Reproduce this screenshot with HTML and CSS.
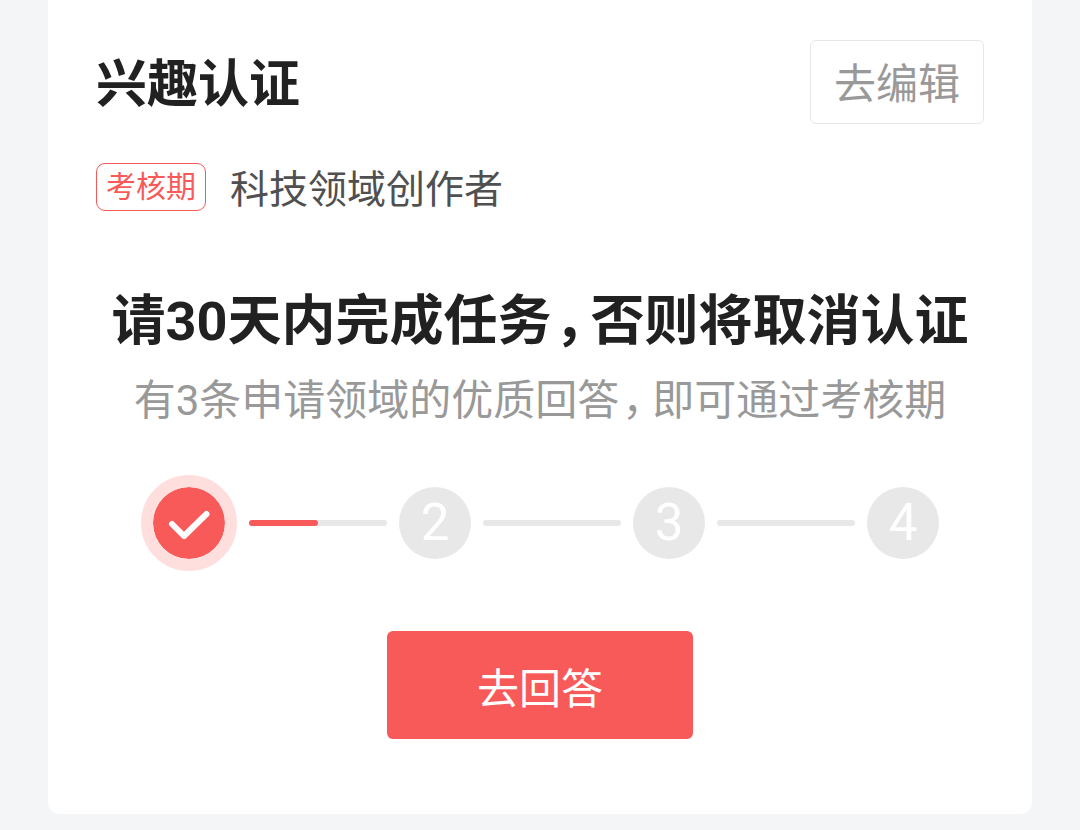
FILE: index.html
```html
<!DOCTYPE html>
<html lang="zh-CN">
<head>
  <meta charset="UTF-8">
  <meta name="viewport" content="width=device-width, initial-scale=1.0">
  <title>兴趣认证</title>
  <link rel="stylesheet" href="styles.css">
</head>
<body>
  <main class="card">
    <header class="card-header">
      <h1 class="card-title">兴趣认证</h1>
      <button class="btn-edit" type="button">去编辑</button>
    </header>

    <div class="identity">
      <span class="tag">考核期</span>
      <span class="identity-name">科技领域创作者</span>
    </div>

    <section class="task">
      <h2 class="task-title">请30天内完成任务<span class="comma">，</span>否则将取消认证</h2>
      <p class="task-desc">有3条申请领域的优质回答<span class="comma">，</span>即可通过考核期</p>

      <!-- 任务进度 -->
      <ol class="steps">
        <li class="step step-done">
          <svg viewBox="0 0 72 72" role="img" aria-label="已完成">
            <path d="M19 37 L31 49 L53.5 27" />
          </svg>
        </li>
        <li class="line"><div class="line-value" style="width: 50%"></div></li>
        <li class="step">2</li>
        <li class="line"></li>
        <li class="step">3</li>
        <li class="line"></li>
        <li class="step">4</li>
      </ol>

      <button class="btn-answer" type="button">去回答</button>
    </section>
  </main>
</body>
</html>
```
FILE: styles.css
```css
* {
  box-sizing: border-box;
}
body {
  margin: 0;
  padding: 0 48px 16px;
  background-color: #f4f5f7;
  color: #212121;
  font-family: Roboto, "Noto Sans CJK SC", sans-serif;
}
h1, h2, p, ol {
  margin: 0;
  padding: 0;
}
button {
  font: inherit;
}

.card {
  padding: 40px 48px 75px;
  background-color: #fff;
  border-radius: 0 0 12px 12px;
}
.card-header {
  display: flex;
  justify-content: space-between;
  align-items: center;
}
.card-title {
  padding-top: 6px;
  font-size: 51px;
  line-height: 72px;
  font-weight: 700;
}
.btn-edit {
  height: 84px;
  padding: 6px 23px 0;
  border: 1px solid #e6e6e6;
  border-radius: 6px;
  background-color: #fff;
  color: #999;
  font-size: 42px;
  line-height: 60px;
}

.identity {
  display: flex;
  align-items: center;
  gap: 24px;
  margin-top: 32px;
}
.tag {
  padding: 0 9px;
  border: 1px solid #f85959;
  border-radius: 9px;
  color: #f85959;
  font-size: 30px;
  line-height: 46px;
}
.identity-name {
  padding-top: 6px;
  color: #505050;
  font-size: 39px;
  line-height: 56px;
}

.task {
  margin-top: 66px;
  text-align: center;
}
.task-title {
  font-size: 54px;
  line-height: 76px;
  font-weight: 700;
  white-space: nowrap;
}
.task-desc {
  margin-top: 11px;
  color: #999;
  font-size: 42px;
  line-height: 60px;
}
/* 逗号用半宽字形，再留一点间距 */
.comma {
  margin: 0 9px 0 3px;
  font-feature-settings: "halt";
}

/* 步骤条 */
.steps {
  display: flex;
  justify-content: center;
  align-items: center;
  gap: 12px;
  margin-top: 44px;
  list-style: none;
}
.step {
  width: 72px;
  height: 72px;
  border-radius: 50%;
  background-color: #e8e8e8;
  color: #fff;
  font-size: 51px;
  line-height: 72px;
}
.step-done {
  width: 96px;
  height: 96px;
  border: 12px solid #ffdede;
  background-color: #f85959;
  background-clip: padding-box;
}
.step-done svg {
  display: block;
  fill: none;
  stroke: #fff;
  stroke-width: 6;
  stroke-linecap: round;
  stroke-linejoin: round;
}
.line {
  width: 138px;
  height: 6px;
  border-radius: 3px;
  background-color: #e8e8e8;
}
.line-value {
  height: 6px;
  border-radius: 3px;
  background-color: #f85959;
}

.btn-answer {
  width: 306px;
  height: 108px;
  margin-top: 60px;
  border: 0;
  border-radius: 6px;
  background-color: #f85959;
  color: #fff;
  font-size: 42px;
}
```
